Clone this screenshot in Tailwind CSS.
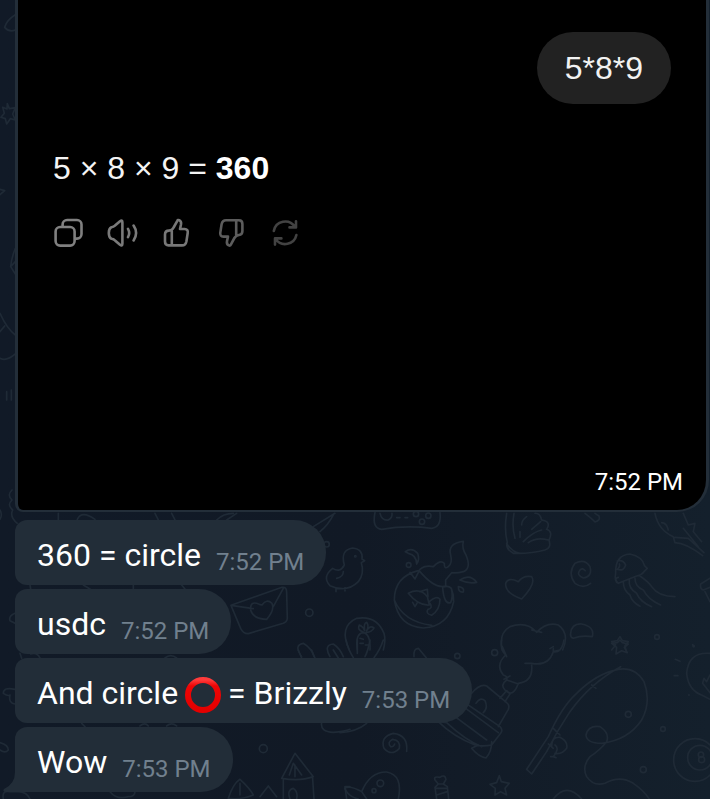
<!DOCTYPE html>
<html lang="en">

<head>
    <meta charset="UTF-8" />
    <meta name="viewport" content="width=device-width, initial-scale=1.0" />
    <title>Chat</title>
    <script src="https://cdn.jsdelivr.net/npm/@tailwindcss/browser@4"></script>
</head>

<body class="relative min-h-screen overflow-x-hidden bg-linear-to-r from-[#111a27] via-[#111925] to-[#14202c] font-['Roboto',sans-serif] text-white">

    <!-- wallpaper doodles -->
    <svg class="absolute inset-0 h-full w-full" viewBox="0 0 710 799" preserveAspectRatio="xMidYMin slice" fill="none" stroke="#1f2a36" stroke-width="5" stroke-linecap="round" stroke-linejoin="round" aria-hidden="true">
        <!-- left edge -->
        <g transform="scale(.3333)">
            <path d="M45 45Q20 60 14 82Q28 98 46 90M22 311L28 326L46 323L38 342L46 360L31 356L20 372L16 356L3 352L13 340L8 322L21 327ZM0 568L14 572L0 584M46 745Q34 775 32 800L46 822M32 800L46 785M0 940Q20 985 46 1005M0 995L14 978M0 1075Q20 1085 46 1062M20 1175V1200M34 1170V1200" />
        </g>
        <!-- middle left -->
        <g transform="translate(0 490) scale(.3333)">
            <path d="M36 0Q20 15 36 30Q20 45 38 60Q28 80 52 100M0 60Q8 75 0 88M175 70V90M232 88Q245 60 285 88M465 70L475 90M515 70L525 90M650 90Q670 70 700 70M680 90L710 70M940 110L1005 70M960 125Q985 105 1000 75M45 370Q25 378 30 392L45 400M90 285L92 297M250 285L270 297M400 285V297M545 285L555 297" />
            <path d="M693 346L846 292Q860 290 860 305L862 385Q862 395 850 400L745 431Q730 432 722 415ZM693 346L760 356M820 350L850 295M778 343Q750 330 752 360Q760 388 800 388Q825 360 816 340Q800 325 786 345ZM905 500Q880 465 910 460Q935 475 942 500M990 500Q970 465 1000 462Q1020 475 1030 500" />
            <circle cx="928" cy="368" r="11" /><circle cx="980" cy="163" r="8" />
        </g>
        <!-- upper right -->
        <g transform="translate(340 500) scale(.3333)">
            <path d="M105 38Q95 85 125 88Q200 75 275 85Q305 82 300 38M120 40Q125 62 145 60Q158 52 156 40M170 53H180M195 53H203" />
            <circle cx="228" cy="42" r="8" /><circle cx="265" cy="47" r="8" /><circle cx="246" cy="65" r="8" />
            <!-- duck -->
            <path d="M13 195Q0 150 38 144Q70 148 66 177L74 182L64 188Q74 220 55 245Q20 280 -30 257Q-55 230 -22 205Q0 220 13 195M-10 235Q10 230 10 215M-12 265V275M15 263V273" />
            <circle cx="46" cy="169" r="2" />
            <!-- fish bowl -->
            <path d="M235 212Q163 230 163 300Q175 380 250 384Q325 380 341 305Q342 285 334 265M163 300Q190 365 275 376M210 217L225 237L240 208Q255 195 280 200Q300 178 313 190Q312 210 325 200Q338 190 332 165Q322 130 370 124Q365 145 378 165Q395 205 370 215Q350 220 335 218L317 240V258Q285 268 240 215M308 262Q325 255 334 265Q340 290 332 308Q312 315 308 262M205 280Q240 262 262 290L268 315Q235 318 205 280M240 275L262 268L264 290M218 307L225 320L232 308M268 305Q290 285 300 298Q300 330 275 346Q255 340 264 328Q280 325 270 310M196 155Q215 140 233 160Q240 180 230 192Q230 165 205 160ZM360 240Q390 220 410 247Q385 252 360 240M355 260Q375 262 370 276Q355 278 355 260" />
            <circle cx="206" cy="195" r="7" />
            <!-- shell -->
            <path d="M500 40Q492 90 502 128Q495 145 520 160Q570 162 615 150Q635 145 627 120Q640 95 620 88Q635 65 605 60Q600 38 585 40M522 40Q515 80 525 115M540 95V112M560 50Q545 60 545 75M602 65L575 88M605 90Q580 95 550 125M625 120Q590 110 565 128M500 130Q515 155 540 160" />
            <!-- heart, swirl -->
            <path d="M545 297Q495 280 497 250Q505 230 535 245Q550 225 575 230Q590 250 545 297M752 250Q730 268 705 250Q682 220 705 190Q735 175 750 200Q758 230 730 234Q708 225 720 210Q728 202 736 212M735 40Q755 55 765 66Q782 62 777 48L765 40" />
            <!-- jellyfish -->
            <path d="M835 250Q822 245 827 220Q825 165 870 162Q908 170 914 198L922 205L912 215Q905 225 890 228L835 250Q820 235 835 232M832 183Q850 178 857 195Q852 215 832 208Q842 200 838 192M850 245Q850 270 870 285Q875 305 900 319M868 240Q865 265 890 280Q900 305 935 320M885 235Q885 260 910 270Q925 300 962 315M900 228Q925 245 935 260Q955 290 1005 290" />
            <!-- squid -->
            <path d="M945 40Q955 90 1000 110L1005 128Q1040 130 1088 167M965 68Q980 68 985 90M1030 40L1045 75L1065 70L1060 95L1085 125M1005 112L1045 115L1092 158M1030 85L1075 140M1110 235L1082 252Q1080 268 1090 270L1110 262M1095 275L1110 305" />
            <!-- carrot -->
            <path d="M28 450Q-5 380 50 355Q110 345 132 400Q138 420 130 450M52 450Q45 400 70 398Q92 402 90 450M70 396Q50 390 58 375Q70 380 74 392Q70 370 80 367Q88 378 80 392Q90 375 102 384Q95 398 78 397M60 415L70 418M76 435H85" />
            <!-- cloud, star -->
            <path d="M487 450Q475 400 510 380Q560 362 590 397Q620 365 655 375Q690 400 668 450M575 390L605 397M692 400Q695 370 725 372Q765 380 757 410Q725 405 700 415Q690 412 692 400M840 410L847 422L865 425L855 437L858 450M840 410L832 422L815 425L827 435L815 450M630 446L640 440" />
            <circle cx="951" cy="411" r="7" /><circle cx="1061" cy="438" r="2" />
        </g>
        <!-- lower right -->
        <g transform="translate(340 640) scale(.3333)">
            <path d="M18 0Q25 30 40 53M130 0Q120 30 102 53M52 0V40M90 0Q85 30 75 50M60 10H70M0 278Q50 275 80 250M222 50Q220 25 235 25L260 55" />
            <circle cx="352" cy="48" r="8" /><circle cx="464" cy="38" r="9" />
            <!-- steamboat -->
            <path d="M485 0Q480 30 497 45Q465 75 490 105Q505 110 500 120Q480 135 495 150Q520 175 535 130Q580 125 575 75M555 70H575Q625 80 640 35Q665 40 672 0M487 20L500 50M492 118L510 108M500 120L535 132M640 25V35L660 30M480 175L500 152L510 162L495 185M395 160Q420 130 440 138L500 188Q510 195 505 208L475 260M385 195L480 260Q490 270 482 280L455 315Q430 320 405 315Q340 290 295 245M300 245L320 248Q375 300 425 320M345 230L440 300M370 200L475 278M408 190Q420 170 435 182Q445 205 430 218M395 325Q415 350 438 354Q455 335 455 305M395 325L415 315" />
            <!-- fishing rod -->
            <path d="M560 388L575 402L620 335Q650 275 690 215Q750 130 842 80M560 388L625 290Q665 200 710 160Q770 100 835 88Q885 80 912 125Q935 185 905 240Q865 300 785 310Q740 310 738 285Q745 255 780 260Q810 280 800 305Q780 330 750 350Q725 380 740 410Q760 440 795 430Q840 405 880 430Q910 450 928 477M640 265L660 285M755 135L768 145M635 318Q635 290 660 292Q685 305 680 325Q665 345 645 340M645 315Q660 325 640 350L632 350M640 350L648 353M625 312L640 325" />
            <circle cx="865" cy="223" r="9" /><circle cx="969" cy="267" r="7" /><circle cx="910" cy="389" r="9" />
            <!-- bulb, ball -->
            <path d="M1110 40Q1045 35 1040 100Q1045 150 1085 165L1110 178M1110 105L1100 125L1092 115L1088 130L1110 158M1006 58L1020 64M1003 107H1014M1047 164V166M1058 14L1062 20" />
            <circle cx="1065" cy="360" r="64" /><circle cx="1080" cy="353" r="37" /><circle cx="1083" cy="344" r="8" /><circle cx="1085" cy="359" r="9" />
            <path d="M200 334Q205 285 160 280Q120 290 132 325Q155 350 178 325Q182 300 158 298Q140 308 152 320Q160 322 164 312" />
            <!-- fish, candy, stars -->
            <path d="M65 455Q90 395 140 396Q190 405 175 477M65 455Q30 435 14 445Q25 470 55 477M65 455L80 477M285 420Q280 408 300 412Q315 402 318 418L310 432L322 440L326 477M285 420L295 432L285 442L290 477M295 432H310M288 445H320M290 465L322 455M478 407L484 425L508 430L495 445L500 465L482 455L465 465L466 445L450 433L470 428ZM840 0L847 8L865 12L853 22L862 38L845 32L828 42L830 22L815 10L832 8ZM640 477Q680 425 725 477" />
            <circle cx="121" cy="430" r="10" /><circle cx="102" cy="452" r="6" />
        </g>
        <!-- lower left -->
        <g transform="translate(0 650) scale(.3333)">
            <path d="M60 10L65 25M92 12Q110 5 120 24M495 24Q512 10 530 24M45 118Q10 110 10 130Q25 140 30 135Q25 160 45 162M0 278Q25 285 25 300Q15 312 0 300M245 220L255 230M420 228Q435 215 445 228M500 228Q515 215 530 228M965 218Q960 245 1000 247Q1035 245 1050 238M10 447Q5 420 30 425L55 425Q80 425 90 447M330 425Q350 450 385 440Q405 440 405 425" />
            <circle cx="790" cy="296" r="12" />
            <path d="M845 385L885 310L940 380Q900 395 845 385M850 390V447M938 385L942 447M868 375L880 340L905 375M885 345V380M685 445Q700 400 720 388Q750 415 760 435Q725 450 685 445M720 400V435M780 440L805 408L830 440M870 447Q860 420 880 415Q895 425 890 447M895 0L905 24M935 0L945 24M1000 0L1015 24M1050 410H1035L1040 447" />
        </g>
    </svg>

    <main class="relative flex flex-col items-start gap-1 pb-1 pl-[15px]">

        <!-- photo message -->
        <article class="mb-1 flex w-full flex-col pr-px">
            <div class="flex flex-col rounded-br-[32px] rounded-bl-lg border-x-3 border-b-2 border-[#232e39] bg-black px-[35px] pt-8">
                <p class="flex h-[72px] items-center self-end rounded-full bg-[#222222] px-7 font-['Liberation_Sans',sans-serif] text-[32px] text-[#f2f2f2]">5*8*9</p>
                <p class="mt-11 font-['Liberation_Sans',sans-serif] text-[32px] leading-10 text-[#f4f4f4]">5 × 8 × 9 = <strong class="font-bold text-white">360</strong></p>
                <div class="mt-[29px] flex gap-[22px]">
                    <button type="button" aria-label="Copy" class="text-[#808080]">
                        <svg class="size-8" viewBox="0 0 32 32" fill="none" stroke="currentColor" stroke-width="2.6" stroke-linejoin="round">
                            <rect x="2.6" y="10" width="19" height="18.6" rx="4.5" />
                            <path d="M9.6 10V7.5a4.5 4.5 0 0 1 4.5-4.5h9.9a4.5 4.5 0 0 1 4.5 4.5v9.6a4.5 4.5 0 0 1-4.5 4.5h-2.4" />
                        </svg>
                    </button>
                    <button type="button" aria-label="Read aloud" class="text-[#7a7a7a]">
                        <svg class="size-8" viewBox="0 0 32 32" fill="none" stroke="currentColor" stroke-width="2.6" stroke-linecap="round" stroke-linejoin="round">
                            <path d="M4.5 10.2Q6.5 10 8 8.6L13 4.2Q15.4 2.4 15.4 5.5V26.5Q15.4 29.6 13 27.8L8 23.4Q6.5 22 4.5 21.8Q1.8 20.5 1.8 16Q1.8 11.5 4.5 10.2Z" />
                            <path d="M21 11.8Q23.4 16 21 20.2M26.6 8.6Q31.6 16 26.6 23.4" />
                        </svg>
                    </button>
                    <button type="button" aria-label="Good response" class="text-[#777777]">
                        <svg class="size-8" viewBox="0 0 32 32" fill="none" stroke="currentColor" stroke-width="2.6" stroke-linecap="round" stroke-linejoin="round">
                            <path d="M11 28.4H7.5Q4 28.4 4 24.5V17.5Q4 13.6 8 13.6Q11 13.6 12.6 10.5L16.3 3.8Q16.8 2.6 18.2 3.2Q20.6 4.4 20 7.5L19 12H23.5Q27.4 12.2 26.7 16L25.4 24.5Q24.6 28.4 21 28.4H11M10.8 14V28.4" />
                        </svg>
                    </button>
                    <button type="button" aria-label="Bad response" class="text-[#5c5c5c]">
                        <svg class="size-8" viewBox="0 0 32 32" fill="none" stroke="currentColor" stroke-width="2.6" stroke-linecap="round" stroke-linejoin="round">
                            <path d="M21 3.2H24Q27.4 3.2 27.4 7V14Q27.4 17.8 24 18Q21 18.2 19.4 21L15.7 27.8Q15.2 29 13.8 28.4Q11.4 27.2 12 24.2L13 19.6H8.5Q4.6 19.4 5.3 15.6L6.6 7.2Q7.4 3.2 11 3.2H21M21.2 3.2V18" />
                        </svg>
                    </button>
                    <button type="button" aria-label="Regenerate" class="text-[#424242]">
                        <svg class="size-8" viewBox="0 0 32 32" fill="none" stroke="currentColor" stroke-width="2.6" stroke-linecap="round" stroke-linejoin="round">
                            <path d="M4.8 14A11.5 11.5 0 0 1 25.8 9.8M27 4.2V10.4H20.5M27.4 18A11.5 11.5 0 0 1 6.8 22.2M6 27.6V21.4H12.4" />
                        </svg>
                    </button>
                </div>
                <time class="-mr-3 mt-[217px] mb-3 self-end text-2xl">7:52 PM</time>
            </div>
        </article>

        <article class="flex h-[65px] items-center gap-[15px] rounded-l-xl rounded-r-[32px] bg-[#222d38] px-[22px]">
            <p class="pt-1 text-[32px] leading-10">360 = circle</p>
            <time class="pt-[18px] text-2xl text-[#71808e]">7:52 PM</time>
        </article>

        <article class="flex h-[65px] items-center gap-[15px] rounded-l-xl rounded-r-[32px] bg-[#222d38] px-[22px]">
            <p class="pt-1 text-[32px] leading-10">usdc</p>
            <time class="pt-[18px] text-2xl text-[#71808e]">7:52 PM</time>
        </article>

        <article class="flex h-[65px] items-center gap-[15px] rounded-l-xl rounded-r-[32px] bg-[#222d38] px-[22px]">
            <p class="flex items-center gap-[7px] pt-1 text-[32px] leading-10">
                <span>And circle</span>
                <svg class="mt-1 size-9" viewBox="0 0 36 36" fill="none" role="img" aria-label="Red circle">
                    <defs>
                        <linearGradient id="ring" x1="0" y1="0" x2="0" y2="1">
                            <stop offset="0" stop-color="#ff3b3b" />
                            <stop offset=".2" stop-color="#ee0505" />
                            <stop offset="1" stop-color="#e40000" />
                        </linearGradient>
                    </defs>
                    <circle cx="18" cy="18" r="15" stroke="url(#ring)" stroke-width="6" />
                </svg>
                <span>= Brizzly</span>
            </p>
            <time class="pt-[18px] text-2xl text-[#71808e]">7:53 PM</time>
        </article>

        <article class="relative flex h-[65px] items-center gap-[15px] rounded-l-xl rounded-r-[32px] bg-[#222d38] px-[22px]">
            <svg class="absolute bottom-0 -left-3 h-5 w-7" viewBox="0 0 28 20" fill="#222d38" aria-hidden="true">
                <path d="M12 0Q12 12 1 17Q-1 20 4 20H28V0Z" />
            </svg>
            <p class="relative pt-1 text-[32px] leading-10">Wow</p>
            <time class="relative pt-[18px] text-2xl text-[#71808e]">7:53 PM</time>
        </article>
    </main>

</body>

</html>
